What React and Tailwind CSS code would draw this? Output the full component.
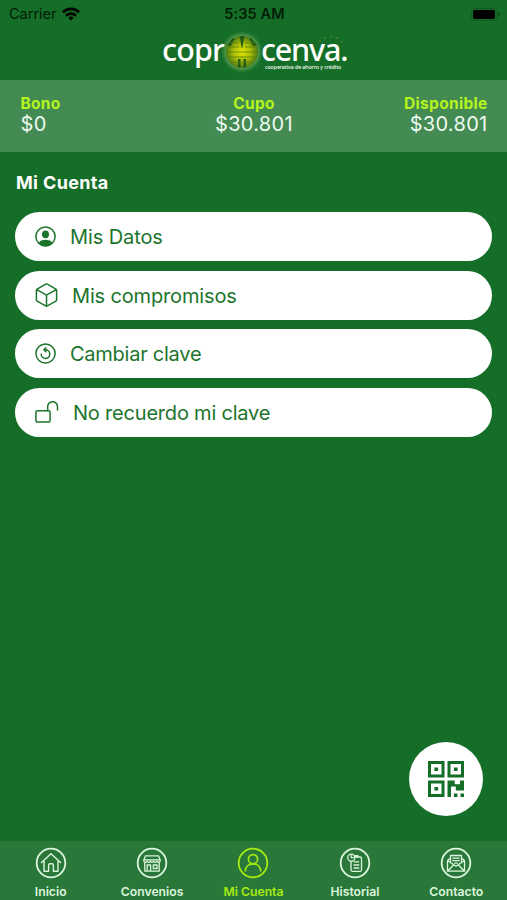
import React from "react";

const strokeProps = {
  fill: "none",
  stroke: "currentColor",
  strokeLinecap: "round",
  strokeLinejoin: "round",
};

const UserCircleIcon = () => (
  <svg className="w-[21px] h-[21px] shrink-0" viewBox="0 0 21 21">
    <circle cx="10.5" cy="10.5" r="9.6" {...strokeProps} strokeWidth="1.5" />
    <ellipse cx="10.5" cy="8.3" rx="3.5" ry="3.9" fill="currentColor" />
    <path d="M3.6 16.900c1.200-2.200 3.900-3.200 6.900-3.200s5.700 1 6.900 3.200c-1.700 2.200-4.200 3.300-6.900 3.300s-5.200-1.100-6.900-3.300z" fill="currentColor" />
  </svg>
);

const CubeIcon = () => (
  <svg className="w-[23px] h-[24px] shrink-0" viewBox="0 0 23 24">
    <path
      d="M10.700 1.200a1.600 1.600 0 0 1 1.600 0l8.600 4.900a1.400 1.400 0 0 1 .7 1.200v9.600a1.400 1.400 0 0 1-.7 1.200l-8.600 4.800a1.600 1.600 0 0 1-1.600 0l-8.600-4.800a1.400 1.400 0 0 1-.7-1.200V7.300a1.400 1.400 0 0 1 .7-1.200zM1.800 6.700l9.700 5.500 9.700-5.500M11.500 12.200v10.700"
      {...strokeProps}
      strokeWidth="1.500"
    />
  </svg>
);

const ResetIcon = () => (
  <svg className="w-[21px] h-[21px] shrink-0" viewBox="0 0 21 21">
    <circle cx="10.500" cy="10.500" r="9.600" {...strokeProps} strokeWidth="1.500" />
    <path d="M6.200 11.200a4.300 4.300 0 1 0 4.300-4.400h-1.300M10.900 4.800l-2 2 2 2" {...strokeProps} strokeWidth="1.500" />
  </svg>
);

const UnlockIcon = () => (
  <svg className="w-[24px] h-[22px] shrink-0" viewBox="0 0 24 22">
    <rect x="0.900" y="9.800" width="14.200" height="11.300" rx="1.500" {...strokeProps} strokeWidth="1.500" />
    <path d="M12.700 9.800V5.600a4.900 4.900 0 0 1 9.800 0v3.300" {...strokeProps} strokeWidth="1.500" />
  </svg>
);

const QrIcon = () => (
  <svg className="w-[36px] h-[36px]" viewBox="0 0 36 36" fill="currentColor">
    <path fillRule="evenodd" d="M0 0h16.500v16.500H0zM3 3v10.500h10.500V3zM19.500 0H36v16.500H19.500zM22.500 3v10.500H33V3zM0 19.500h16.500V36H0zM3 22.500V33h10.500V22.500z" />
    <path d="M6.400 6.400h3.700v3.700H6.400zM25.900 6.400h3.700v3.700h-3.700zM6.400 25.900h3.700v3.700H6.400zM19.500 19.500h7.200v3.700h5.300v-3.700h4v10h-8.200v-4h-4.800V36h-3.500zM25.900 32.500h3.500V36h-3.500zM32.500 32.500H36V36h-3.500z" />
  </svg>
);

const TabIcon = ({ children }) => (
  <svg className="w-[32px] h-[32px]" viewBox="0 0 32 32" {...strokeProps}>
    <circle cx="16" cy="16" r="14.300" strokeWidth="1.800" />
    {children}
  </svg>
);

const HomeIcon = () => (
  <TabIcon>
    <path strokeWidth="1.400" d="M6.500 15.500 16 6.800l9.500 8.700M9 14v10.300h4.600v-6.100a1.500 1.500 0 0 1 1.500-1.500h1.800a1.500 1.500 0 0 1 1.500 1.500v6.100H23V14" />
  </TabIcon>
);

const StoreIcon = () => (
  <TabIcon>
    <path
      strokeWidth="1.300"
      d="M9.500 8.800h13l1.500 4H8zM8.800 15.500v8.700h14.400v-8.700M7.800 12.800v1.300a1.700 1.700 0 0 0 3.300 0 1.700 1.700 0 0 0 3.300 0 1.700 1.700 0 0 0 3.300 0 1.700 1.700 0 0 0 3.300 0 1.700 1.700 0 0 0 3.200 0v-1.300M11.200 24v-6h3.400v6M17.300 18h3.800v3.500h-3.800z"
    />
  </TabIcon>
);

const AccountIcon = () => (
  <TabIcon>
    <g strokeWidth="1.700">
      <circle cx="16" cy="12.200" r="4.600" />
      <path d="M8.300 24c.2-4.300 3.200-7.200 7.700-7.200s7.500 2.900 7.700 7.200" />
    </g>
  </TabIcon>
);

const HistoryIcon = () => (
  <TabIcon>
    <g strokeWidth="1.300">
      <circle cx="12.300" cy="10.700" r="3.500" />
      <path d="M12.300 8.700v2h1.700M16 10h5a1.500 1.500 0 0 1 1.500 1.500v11.300a1.500 1.500 0 0 1-1.500 1.500h-7.500a1.500 1.500 0 0 1-1.500-1.500v-8.500M15.500 10V8.700h3.300V10M15 14.800h4.800M15 18h4.800M15 21h4.800" />
    </g>
  </TabIcon>
);

const MailIcon = () => (
  <TabIcon>
    <path
      strokeWidth="1.300"
      d="M7.500 13.500v10.700h17V13.500L16 19.200zM7.800 24l6-6.200M24.200 24l-6-6.200M7.500 13.500l3-2.500M24.500 13.500l-3-2.500M10.500 15.200V8.500h11v6.700M12.800 11.200h6.400M12.800 13.700h6.400M14.700 16.100h2.600"
    />
  </TabIcon>
);

const Globe = () => (
  <svg className="w-[42px] h-[42px] shrink-0" viewBox="0 0 42 42">
    <defs>
      <radialGradient id="globeGlow">
        <stop offset="72%" stopColor="#7fb56a" stopOpacity="0.8" />
        <stop offset="100%" stopColor="#4f9b4a" stopOpacity="0" />
      </radialGradient>
      <radialGradient id="globeFill">
        <stop offset="0%" stopColor="#e2e600" />
        <stop offset="55%" stopColor="#a9bd08" />
        <stop offset="100%" stopColor="#4a7a14" />
      </radialGradient>
    </defs>
    <circle cx="21" cy="21" r="21" fill="url(#globeGlow)" />
    <circle cx="21" cy="21" r="16" fill="url(#globeFill)" />
    <path d="M18.500 5h5l-2.200 12h-.6zM17 28h2.500v8.500h-2.500zM22.500 28h2.500v8.500h-2.500zM6 14l6-7 2 0-4 8zM36 14l-6-7-2 0 4 8z" fill="#235c15" />
    <path d="M9 12h9M33 12h-9M6 16h12M24 16h12M5 21h32M6 26h30M9 31h24" fill="none" stroke="#5b7d0c" strokeWidth="0.800" />
  </svg>
);

const menuItems = [
  { label: "Mis Datos", Icon: UserCircleIcon, text: "tracking-[-0.100px]" },
  { label: "Mis compromisos", Icon: CubeIcon, text: "tracking-[-0.150px]" },
  { label: "Cambiar clave", Icon: ResetIcon, text: "tracking-[-0.250px]" },
  { label: "No recuerdo mi clave", Icon: UnlockIcon, text: "tracking-[-0.200px]" },
];

const tabs = [
  { label: "Inicio", Icon: HomeIcon },
  { label: "Convenios", Icon: StoreIcon },
  { label: "Mi Cuenta", Icon: AccountIcon, active: true },
  { label: "Historial", Icon: HistoryIcon },
  { label: "Contacto", Icon: MailIcon },
];

const StatusBar = () => (
  <div className="grid grid-cols-3 items-center h-[28px] pl-[9px] pr-[7px] text-[#031c07] text-[14.500px]">
    <div className="flex items-center gap-[5px]">
      <span>Carrier</span>
      <svg className="w-[18px] h-[14px]" viewBox="0 0 18 14" fill="none" stroke="#000" strokeWidth="2.700">
        <path d="M1 5.200a11.500 11.500 0 0 1 16 0M4 8.700a7.200 7.200 0 0 1 10 0" />
        <path d="M9 13.500 6.400 10.900a3.700 3.700 0 0 1 5.200 0z" fill="#000" stroke="none" />
      </svg>
    </div>
    <span className="text-center font-semibold tracking-[0.100px] whitespace-nowrap">5:35 AM</span>
    <div className="flex items-center justify-end gap-px">
      <div className="w-[26px] h-[13px] p-px rounded-[4px] border border-[#10591f]">
        <div className="h-full rounded-[2px] bg-black"></div>
      </div>
      <div className="w-[2px] h-[4px] rounded-r-full bg-[#0d4d18]"></div>
    </div>
  </div>
);

const Logo = () => (
  <div className="relative flex items-start h-[52px] pl-[162px] text-white font-['Noto_Sans','Open_Sans',sans-serif] text-[30.500px] leading-[31px] font-medium">
    <span className="w-[61px] mt-[6px] tracking-[-0.800px]">copr</span>
    <div className="-ml-[2px] mt-[3px]">
      <Globe />
    </div>
    <div className="-ml-[2px] mt-[6px] w-[90px]">
      <span className="block tracking-[-1.200px]">cenva.</span>
      <span className="block -mt-px ml-[4px] text-[5.200px] leading-[6px] tracking-[-0.050px] whitespace-nowrap">
        cooperativa de ahorro y crédito
      </span>
    </div>
    <svg className="absolute left-[319px] top-[8px] w-[26px] h-[8px]" viewBox="0 0 26 8" fill="#8a8f20">
      <circle cx="1" cy="5" r="0.700" />
      <circle cx="6" cy="2" r="0.700" />
      <circle cx="12" cy="1" r="0.700" />
      <circle cx="18" cy="2" r="0.700" />
      <circle cx="23" cy="6" r="0.700" />
    </svg>
  </div>
);

const Balance = ({ label, value, align }) => (
  <div className={align}>
    <div className="text-[#b5f51c] text-[15.500px] leading-[20px] font-bold tracking-[0.300px]">{label}</div>
    <div className="text-[#eefaf0] text-[20px] leading-[21px] tracking-[0.300px]">{value}</div>
  </div>
);

const App = () => {
  return (
    <div className="flex flex-col w-[507px] h-[900px] overflow-hidden bg-[#156e27] font-['Inter','Liberation_Sans',sans-serif]">
      <StatusBar />
      <Logo />
      <div className="grid grid-cols-3 h-[72px] pt-[14px] pl-[20.500px] pr-[19.500px] bg-[#448b53]">
        <Balance label="Bono" value="$0" align="text-left" />
        <Balance label="Cupo" value="$30.801" align="text-center" />
        <Balance label="Disponible" value="$30.801" align="text-right" />
      </div>
      <main className="flex flex-col flex-1 px-[15px]">
        <h1 className="pt-[19px] pl-px text-white text-[18px] leading-[24px] font-bold tracking-[0.350px]">Mi Cuenta</h1>
        <div className="flex flex-col gap-[9.500px] mt-[17px]">
          {menuItems.map(({ label, Icon, text }) => (
            <button
              key={label}
              className="flex items-center gap-[14px] w-[477px] h-[49px] pl-[20px] rounded-full bg-white text-[#1c742c]"
            >
              <Icon />
              <span className={`pt-px text-[20px] leading-[28px] ${text}`}>{label}</span>
            </button>
          ))}
        </div>
        <button className="flex items-center justify-center self-end w-[74px] h-[74px] mt-auto mb-[25px] mr-[9px] rounded-full bg-white text-[#156e27]">
          <QrIcon />
        </button>
      </main>
      <nav className="grid grid-cols-5 h-[59px] pt-[6px] bg-[#2a7839]">
        {tabs.map(({ label, Icon, active }) => (
          <div
            key={label}
            className={`flex flex-col items-center ${active ? "text-[#a5eb12]" : "text-[#dcf5dd]"}`}
          >
            <Icon />
            <span className="mt-[5px] text-[12.200px] leading-[16px] font-semibold">{label}</span>
          </div>
        ))}
      </nav>
    </div>
  );
};

export default App;
